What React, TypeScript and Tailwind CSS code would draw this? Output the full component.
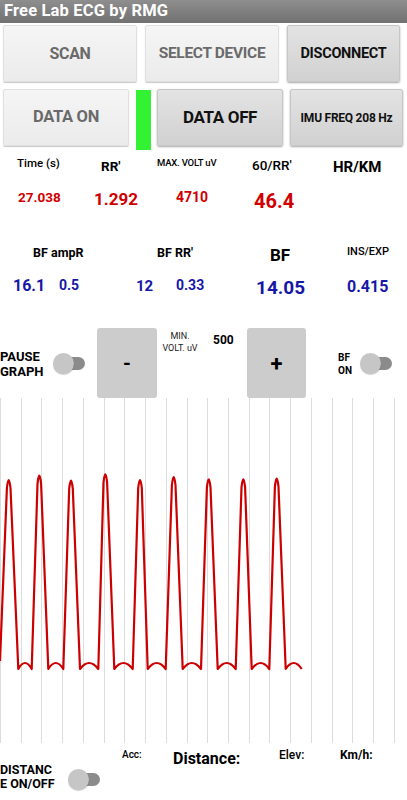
import React from 'react'

// ─── Chart data ───────────────────────────────────────────────────────────────

const PEAKS = [
  { x: 8.7, y: 82 },
  { x: 39.3, y: 77.7 },
  { x: 71, y: 82.7 },
  { x: 105.3, y: 76.3 },
  { x: 140, y: 82 },
  { x: 173.7, y: 79 },
  { x: 208.7, y: 81.3 },
  { x: 243.3, y: 81.3 },
  { x: 276.7, y: 80.7 },
]

const TROUGHS: Array<[number, number]> = [
  [18.3, 31.7],
  [48.3, 63.3],
  [80, 98.3],
  [114.3, 132.7],
  [147.7, 165.7],
  [182.7, 201],
  [217.7, 235.7],
  [251.7, 269.3],
  [285.7, 301.7],
]

const BASE = 271

function buildTrace(): string {
  let d = 'M0,263'
  PEAKS.forEach((p, i) => {
    d += ` L${p.x - 1.8},${p.y + 8} Q${p.x},${p.y - 8} ${p.x + 1.8},${p.y + 8}`
    const [a, b] = TROUGHS[i]
    const mid = (a + b) / 2
    d += ` L${a},${BASE} Q${mid},${BASE - 12} ${b},${BASE}`
  })
  return d
}

const GRID = Array.from({ length: 20 }, (_, i) => Math.round(i * 20.73) + 0.5)

// ─── Small pieces ─────────────────────────────────────────────────────────────

function Toggle(): React.JSX.Element {
  return (
    <div className="relative w-[32px] h-[21px] shrink-0">
      <div className="absolute left-[7px] top-[4px] w-[25px] h-[13px] rounded-full bg-[#8b8b8b]" />
      <div className="absolute left-0 top-0 w-[21px] h-[21px] rounded-full bg-[#c6c6c6] shadow-[0_1px_1px_rgba(0,0,0,0.2)]" />
    </div>
  )
}

const lightBtn =
  'flex items-center justify-center bg-linear-to-b from-[#f5f5f5] to-[#ebebeb] border border-[#e0e0e0] rounded-[2px] shadow-[0_1px_1px_rgba(0,0,0,0.22)] text-[#6a6a6a] font-bold tracking-[-0.02em]'
const darkBtn =
  'flex items-center justify-center bg-linear-to-b from-[#e3e3e3] to-[#d1d1d1] border border-[#c6c6c6] rounded-[2px] shadow-[0_1px_2px_rgba(0,0,0,0.35)] text-[#111] font-bold tracking-[-0.02em]'

export default function App(): React.JSX.Element {
  return (
    <div className="w-[407px] h-[800px] overflow-hidden bg-white font-[Roboto,sans-serif]">
      {/* Title bar */}
      <div className="h-[23px] bg-linear-to-b from-[#8e8e8e] to-[#717171] pl-[4px] flex items-center">
        <span className="text-white font-bold text-[16.5px] leading-none tracking-[0.01em] -mt-[1px]">
          Free Lab ECG by RMG
        </span>
      </div>

      {/* Buttons row 1 */}
      <div className="flex mt-[2px] pl-[3px] h-[57px]">
        <div className={`${lightBtn} w-[134px] text-[16px]`}>SCAN</div>
        <div className={`${lightBtn} w-[134px] ml-[8px] text-[15.5px]`}>SELECT DEVICE</div>
        <div className={`${darkBtn} w-[113px] ml-[8px] text-[14.5px]`}>DISCONNECT</div>
      </div>

      {/* Buttons row 2 */}
      <div className="flex items-start mt-[7px] pl-[3px] h-[61px]">
        <div className={`${lightBtn} w-[126px] h-[57px] text-[16.5px]`}>DATA ON</div>
        <div className="w-[15px] h-[60px] mt-[1px] ml-[7px] bg-[#33f233]" />
        <div className={`${darkBtn} w-[126px] h-[57px] ml-[6px] text-[17px]`}>DATA OFF</div>
        <div className={`${darkBtn} w-[113px] h-[57px] ml-[7px] text-[12px]`}>IMU FREQ 208 Hz</div>
      </div>

      {/* Labels row 1 */}
      <div className="flex items-start h-[30px] pl-[17px] text-black">
        <span className="w-[84px] shrink-0 mt-[6px] text-[11.5px] leading-[14px] font-medium">Time (s)</span>
        <span className="w-[56px] shrink-0 mt-[8px] text-[13.5px] leading-[16px] font-bold">RR'</span>
        <span className="w-[95px] shrink-0 mt-[7px] text-[9.5px] leading-[12px] font-medium tracking-[-0.02em]">MAX. VOLT uV</span>
        <span className="w-[81px] shrink-0 mt-[7px] text-[13.5px] leading-[16px] font-medium">60/RR'</span>
        <span className="mt-[8px] text-[15px] leading-[18px] font-bold">HR/KM</span>
      </div>

      {/* Values row 1 */}
      <div className="flex items-start h-[30px] pl-[18px] pt-[9px] text-[#d00000] font-bold">
        <span className="w-[76px] shrink-0 text-[13.5px] leading-[16px]">27.038</span>
        <span className="w-[82px] shrink-0 text-[17px] leading-[20px]">1.292</span>
        <span className="w-[78px] shrink-0 text-[14px] leading-[16px]">4710</span>
        <span className="text-[20px] leading-[24px]">46.4</span>
      </div>

      {/* Labels row 2 */}
      <div className="flex items-start h-[60px] pl-[33px] pt-[35px] text-black">
        <span className="w-[124px] shrink-0 text-[12.5px] leading-[15px] font-bold">BF ampR</span>
        <span className="w-[113px] shrink-0 text-[12.5px] leading-[15px] font-bold">BF RR'</span>
        <span className="w-[77px] shrink-0 text-[17px] leading-[20px] font-bold">BF</span>
        <span className="text-[11px] leading-[13px] font-medium">INS/EXP</span>
      </div>

      {/* Values row 2 */}
      <div className="flex items-start h-[35px] pl-[13px] pt-[7px] text-[#1717a6] font-bold">
        <span className="w-[46px] shrink-0 text-[16px] leading-[18px]">16.1</span>
        <span className="w-[77px] shrink-0 text-[14px] leading-[16px]">0.5</span>
        <span className="w-[40px] shrink-0 text-[15px] leading-[18px]">12</span>
        <span className="w-[80px] shrink-0 text-[14px] leading-[16px]">0.33</span>
        <span className="w-[91px] shrink-0 text-[19px] leading-[22px]">14.05</span>
        <span className="text-[16px] leading-[20px]">0.415</span>
      </div>

      {/* Controls row */}
      <div className="flex items-start h-[93px] text-black">
        <div className="w-[53px] shrink-0 mt-[44px] text-[13px] leading-[15px] font-bold">
          PAUSE
          <br />
          GRAPH
        </div>
        <div className="mt-[48px]">
          <Toggle />
        </div>
        <div className="w-[60px] h-[70px] shrink-0 ml-[12px] mt-[23px] rounded-[3px] bg-[#cccccc] flex items-center justify-center text-[20px] font-bold">
          -
        </div>
        <div className="w-[38px] shrink-0 ml-[4px] mt-[26px] text-center text-[9px] leading-[11.6px] text-[#222]">
          MIN.
          <br />
          VOLT. uV
        </div>
        <div className="w-[22px] shrink-0 ml-[14px] mt-[28px] text-[12px] leading-[14px] font-bold">500</div>
        <div className="w-[59px] h-[70px] shrink-0 ml-[12px] mt-[23px] rounded-[3px] bg-[#cccccc] flex items-center justify-center text-[22px] font-bold">
          +
        </div>
        <div className="w-[22px] shrink-0 ml-[32px] mt-[46px] text-[10px] leading-[13.3px] font-bold">
          BF
          <br />
          ON
        </div>
        <div className="mt-[48px]">
          <Toggle />
        </div>
      </div>

      {/* ECG chart */}
      <svg width="407" height="345" viewBox="0 0 407 345" className="block">
        {GRID.map((x) => (
          <line key={x} x1={x} y1={0} x2={x} y2={345} stroke="#dcdcdc" strokeWidth={1} />
        ))}
        <path d={buildTrace()} fill="none" stroke="#cc0000" strokeWidth={2.2} strokeLinejoin="round" />
      </svg>

      {/* Bottom row */}
      <div className="flex items-start h-[20px] text-black">
        <span className="w-[173px] shrink-0 pl-[122px] mt-[6px] text-[10px] leading-[12px] font-medium">Acc:</span>
        <span className="w-[106px] shrink-0 mt-[7px] text-[16px] leading-[18px] font-bold">Distance:</span>
        <span className="w-[61px] shrink-0 mt-[5px] text-[12px] leading-[14px] font-medium">Elev:</span>
        <span className="mt-[5px] text-[12px] leading-[14px] font-bold">Km/h:</span>
      </div>
      <div className="flex items-start text-black">
        <div className="w-[68px] shrink-0 text-[12.5px] leading-[14.3px] font-bold">
          DISTANC
          <br />
          E ON/OFF
        </div>
        <div className="mt-[6px]">
          <Toggle />
        </div>
      </div>
    </div>
  )
}
